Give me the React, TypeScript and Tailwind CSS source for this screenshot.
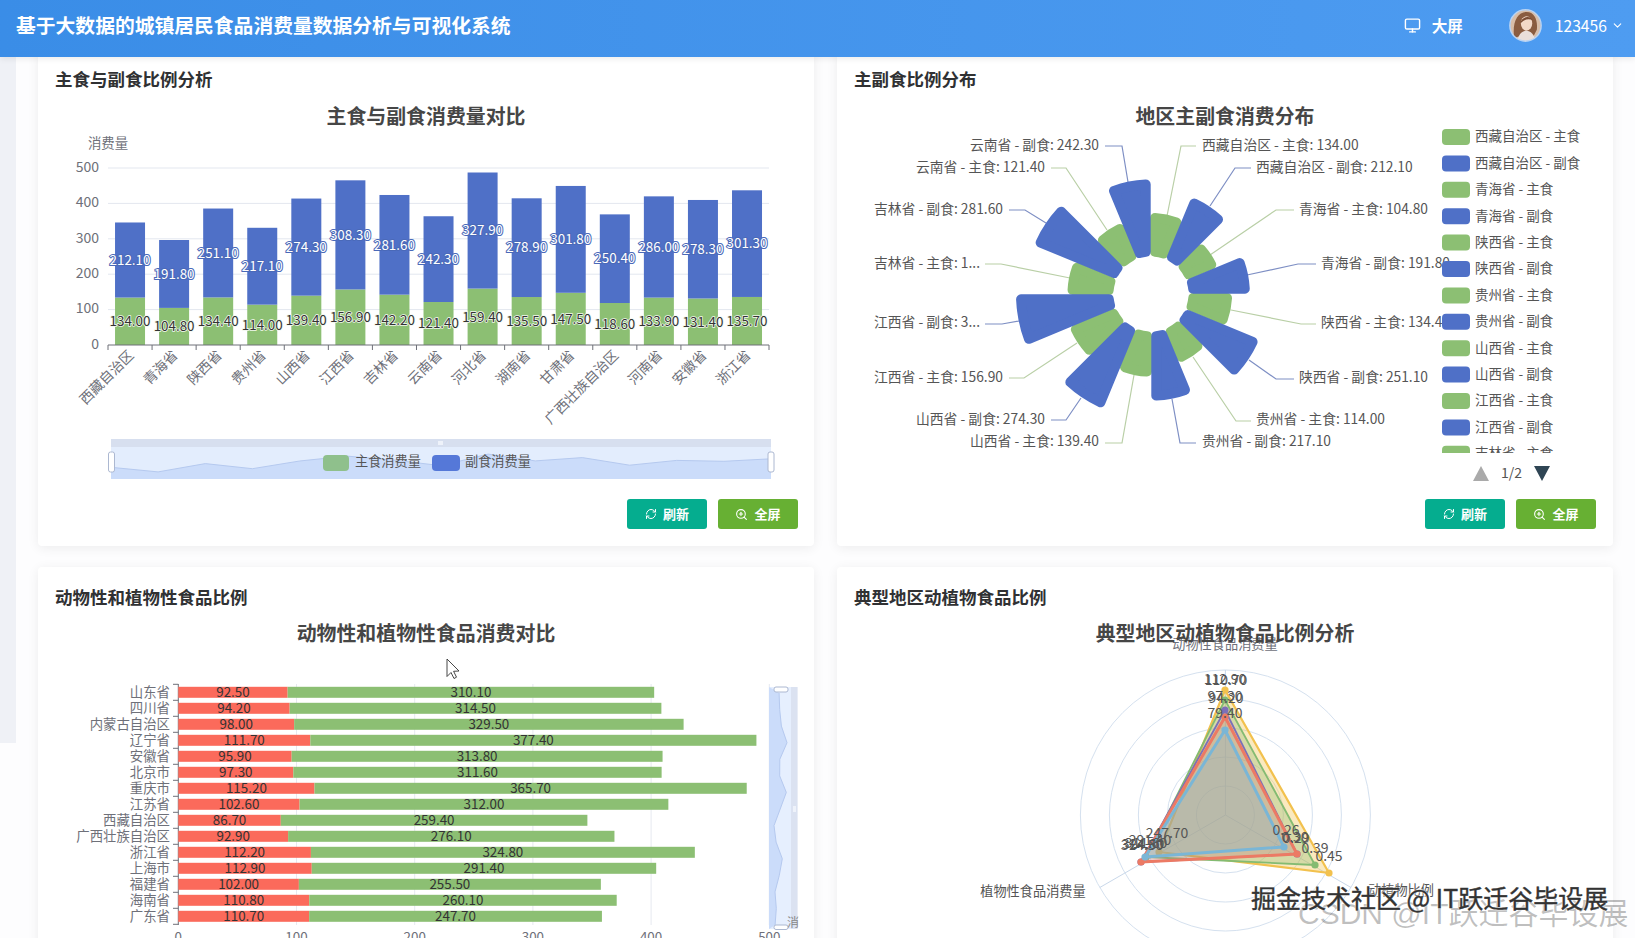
import type { ComponentProps, ReactNode } from 'react'
import { ChevronDown, Monitor, RefreshCw, ZoomIn } from 'lucide-react'

const GREEN = '#8cbf73'
const BLUE = '#4f70c7'
const RED = '#fb6a5b'
const AXIS = '#6e7079'

const stackData = [
  ['西藏自治区', 134, 212.1],
  ['青海省', 104.8, 191.8],
  ['陕西省', 134.4, 251.1],
  ['贵州省', 114, 217.1],
  ['山西省', 139.4, 274.3],
  ['江西省', 156.9, 308.3],
  ['吉林省', 142.2, 281.6],
  ['云南省', 121.4, 242.3],
  ['河北省', 159.4, 327.9],
  ['湖南省', 135.5, 278.9],
  ['甘肃省', 147.5, 301.8],
  ['广西壮族自治区', 118.6, 250.4],
  ['河南省', 133.9, 286],
  ['安徽省', 131.4, 278.3],
  ['浙江省', 135.7, 301.3],
] as const

const barData = [
  ['山东省', 92.5, 310.1],
  ['四川省', 94.2, 314.5],
  ['内蒙古自治区', 98, 329.5],
  ['辽宁省', 111.7, 377.4],
  ['安徽省', 95.9, 313.8],
  ['北京市', 97.3, 311.6],
  ['重庆市', 115.2, 365.7],
  ['江苏省', 102.6, 312],
  ['西藏自治区', 86.7, 259.4],
  ['广西壮族自治区', 92.9, 276.1],
  ['浙江省', 112.2, 324.8],
  ['上海市', 112.9, 291.4],
  ['福建省', 102, 255.5],
  ['海南省', 110.8, 260.1],
  ['广东省', 110.7, 247.7],
] as const

// rose labels: text, anchor x, y, leader line
const roseLabels: [string, number, number, 'start' | 'end', string][] = [
  ['西藏自治区 - 主食: 134.00', 1202, 145, 'start', '1167,216 1181,146 1196,146'],
  ['西藏自治区 - 副食: 212.10', 1256, 167, 'start', '1210,206 1235,168 1251,168'],
  ['青海省 - 主食: 104.80', 1299, 209, 'start', '1210,255 1276,210 1294,210'],
  ['青海省 - 副食: 191.80', 1321, 263, 'start', '1247,275 1298,264 1316,264'],
  ['陕西省 - 主食: 134.40', 1321, 322, 'start', '1231,310 1301,324 1316,324'],
  ['陕西省 - 副食: 251.10', 1299, 377, 'start', '1249,360 1276,379 1294,379'],
  ['贵州省 - 主食: 114.00', 1256, 419, 'start', '1193,357 1236,421 1251,421'],
  ['贵州省 - 副食: 217.10', 1202, 441, 'start', '1172,399 1180,443 1196,443'],
  ['山西省 - 主食: 139.40', 1099, 441, 'end', '1134,375 1122,443 1105,443'],
  ['山西省 - 副食: 274.30', 1045, 419, 'end', '1081,398 1066,420 1051,420'],
  ['江西省 - 主食: 156.90', 1003, 377, 'end', '1077,343 1024,378 1009,378'],
  ['江西省 - 副食: 3...', 980, 322, 'end', '1019,321 1002,324 985,324'],
  ['吉林省 - 主食: 1...', 980, 263, 'end', '1070,278 1001,264 985,264'],
  ['吉林省 - 副食: 281.60', 1003, 209, 'end', '1046,223 1025,210 1009,210'],
  ['云南省 - 主食: 121.40', 1045, 167, 'end', '1107,230 1066,168 1051,168'],
  ['云南省 - 副食: 242.30', 1099, 145, 'end', '1128,182 1122,146 1105,146'],
]

const roseValues = [134, 212.1, 104.8, 191.8, 134.4, 251.1, 114, 217.1, 139.4, 274.3, 156.9, 308.3, 142.2, 281.6, 121.4, 242.3]

const legendNames = ['西藏自治区', '青海省', '陕西省', '贵州省', '山西省', '江西省', '吉林省']

const radarSeries = [
  { color: '#f2c14e', fill: 0.36, width: 2.2, pts: [[1225, 690], [1159, 852], [1329, 873]] },
  { color: '#84bb72', fill: 0.3, width: 1.8, pts: [[1225, 700], [1146, 857], [1315, 865]] },
  { color: '#7d6fb8', fill: 0.14, width: 1.8, pts: [[1225, 710], [1141, 862], [1297, 854]] },
  { color: '#ec7a64', fill: 0.18, width: 3, pts: [[1225, 717], [1141, 862], [1297, 854]] },
  { color: '#7ab6d6', fill: 0.26, width: 3, pts: [[1225, 730], [1145, 857], [1284, 847]] },
]

const radarLabels: [string, number, number][] = [
  ['112.90', 1225, 679], ['110.70', 1226, 680], ['97.30', 1225, 696], ['94.20', 1226, 698], ['79.40', 1225, 713],
  ['247.70', 1167, 833], ['291.40', 1150, 840], ['311.60', 1146, 843], ['314.50', 1142, 845], ['324.80', 1143, 844],
  ['0.26', 1286, 830], ['0.30', 1295, 837], ['0.29', 1296, 838], ['0.39', 1315, 848], ['0.45', 1329, 856],
]

function polar(cx: number, cy: number, r: number, a: number) {
  return `${(cx + r * Math.sin(a)).toFixed(2)} ${(cy - r * Math.cos(a)).toFixed(2)}`
}

function sectorPath(i: number, R: number, g: number) {
  const cx = 1151
  const cy = 294
  const rr = 5
  const ri = 37.5 + rr
  const ro = R - rr
  const step = Math.PI / 8
  const a0 = i * step
  const a1 = a0 + step
  const di = Math.asin(g / ri)
  const dO = Math.asin(g / ro)
  return [
    `M${polar(cx, cy, ri, a0 + di)}`,
    `L${polar(cx, cy, ro, a0 + dO)}`,
    `A${ro} ${ro} 0 0 1 ${polar(cx, cy, ro, a1 - dO)}`,
    `L${polar(cx, cy, ri, a1 - di)}`,
    `A${ri} ${ri} 0 0 0 ${polar(cx, cy, ri, a0 + di)}Z`,
  ].join(' ')
}

// chart text, vertically centred on y
function T(props: ComponentProps<'text'>) {
  return <text dominantBaseline="central" dy={-1.2} {...props} />
}

function Card({ title, x, y, children }: { title: string; x: number; y: number; children: ReactNode }) {
  return (
    <div className="h-[497px] w-[776px] rounded bg-white shadow-[0_2px_12px_rgba(0,0,0,0.07)]">
      <h3 className="px-[17px] pt-[19px] text-[17.5px] leading-[22px] font-bold text-[#303133]">{title}</h3>
      <svg viewBox={`${x} ${y + 46} 776 400`} className="mt-[5px] block h-[400px] w-[776px]">
        {children}
      </svg>
      <div className={`mt-[4px] flex justify-end gap-[11px] ${x > 100 ? 'pr-[17px]' : 'pr-[16px]'}`}>
        <button className="flex h-[30px] w-[80px] items-center justify-center gap-[6px] rounded-[3px] bg-[#05ad8f] text-[13px] font-bold text-white">
          <RefreshCw className="h-[12px] w-[12px]" />
          刷新
        </button>
        <button className="flex h-[30px] w-[80px] items-center justify-center gap-[6px] rounded-[3px] bg-[#67b033] text-[13px] font-bold text-white">
          <ZoomIn className="h-[13px] w-[13px]" />
          全屏
        </button>
      </div>
    </div>
  )
}

function ChartTitle({ x, y, children }: { x: number; y: number; children: string }) {
  return (
    <text x={x} y={y} dy={-1.6} textAnchor="middle" dominantBaseline="central" fontSize="19.9" fontWeight="700" fill="#464646">
      {children}
    </text>
  )
}

function StackChart() {
  const y0 = 345
  const k = 0.354
  const top = 108
  const step = 44.07
  const totals = stackData.map((d) => d[1] + d[2])
  const zoomLine = totals.map((t, i) => `${(111 + (i * 660) / 14).toFixed(1)},${(472 - ((t - 296) / 192) * 18).toFixed(1)}`)
  return (
    <>
      <ChartTitle x={426} y={117}>主食与副食消费量对比</ChartTitle>
      <T x={108} y={143} textAnchor="middle" fontSize="13.4" fill={AXIS}>消费量</T>
      {[0, 100, 200, 300, 400, 500].map((v) => (
        <g key={v}>
          {v > 0 && <line x1={top} x2={769} y1={y0 - v * k} y2={y0 - v * k} stroke="#e3e7ef" />}
          <T x={99} y={y0 - v * k - 1} textAnchor="end" fontSize="14" fill={AXIS}>{v}</T>
        </g>
      ))}
      {stackData.map(([name, a, b], i) => {
        const c = top + step * (i + 0.5)
        return (
          <g key={name}>
            <rect x={c - 15} y={y0 - a * k} width={30} height={a * k} fill={GREEN} />
            <rect x={c - 15} y={y0 - (a + b) * k} width={30} height={b * k} fill={BLUE} />
          </g>
        )
      })}
      <line x1={top} x2={769} y1={y0} y2={y0} stroke={AXIS} />
      {stackData.map(([name, a, b], i) => {
        const c = top + step * (i + 0.5)
        return (
          <g key={name} fontSize="13.4">
            <line x1={top + step * i} x2={top + step * i} y1={y0} y2={y0 + 5} stroke={AXIS} />
            <T x={c} y={y0 - (a * k) / 2} textAnchor="middle" fill="#333" stroke="#f3f8ef" strokeWidth="1.5" paintOrder="stroke">
              {a.toFixed(2)}
            </T>
            <T x={c} y={y0 - (a + b / 2) * k} textAnchor="middle" fill="#fff" stroke="#4a69b8" strokeWidth="2" paintOrder="stroke">
              {b.toFixed(2)}
            </T>
            <text transform={`translate(${c - 4.5} 347) rotate(-45)`} textAnchor="end" dominantBaseline="hanging" fontSize="13.9" fill={AXIS}>
              {name}
            </text>
          </g>
        )
      })}
      <line x1={769} x2={769} y1={y0} y2={y0 + 5} stroke={AXIS} />
      {/* slider */}
      <rect x={111} y={439} width={660} height={8} fill="#d7dfef" />
      <rect x={438} y={441} width={5} height={4} fill="#eef2fa" />
      <rect x={111} y={447} width={660} height={32} fill="#e3edfd" />
      <path d={`M${zoomLine.join(' L')} L771,479 L111,479Z`} fill="#cbdcfa" />
      <polyline points={zoomLine.join(' ')} fill="none" stroke="#b5c9ef" />
      <rect x={108.5} y={452} width={6} height={20} rx={2} fill="#fff" stroke="#acb8d1" />
      <rect x={768} y={452} width={6} height={20} rx={2} fill="#fff" stroke="#acb8d1" />
      <rect x={323} y={455} width={26} height={16} rx={4} fill="#8fc08c" />
      <T x={355} y={462} fontSize="13.2" fill="#555">主食消费量</T>
      <rect x={432} y={455} width={28} height={16} rx={4} fill="#5578d8" />
      <T x={465} y={462} fontSize="13.2" fill="#555">副食消费量</T>
    </>
  )
}

function RoseChart() {
  const items = legendNames.flatMap((n) => [`${n} - 主食`, `${n} - 副食`]).slice(0, 13)
  const sectors = roseValues.map((v, i) => ({ v, i }))
  return (
    <>
      <ChartTitle x={1225} y={117}>地区主副食消费分布</ChartTitle>
      {roseLabels.map(([label, x, y, anchor, line], i) => (
        <g key={label}>
          <polyline points={line} fill="none" stroke={i % 2 === 0 ? '#b9cfa6' : '#7e8fc4'} strokeWidth="1.2" />
          <T x={x} y={y} textAnchor={anchor} fontSize="13.8" fill="#555">{label}</T>
        </g>
      ))}
      {/* greens first so the blue sectors lie over their edges */}
      {sectors.filter((s) => s.i % 2 === 0).map(({ v, i }) => (
        <path key={i} d={sectorPath(i, 81 + (v - 134) * 0.31, 4)} fill={GREEN} stroke={GREEN} strokeWidth="10" strokeLinejoin="round" />
      ))}
      {sectors.filter((s) => s.i % 2 === 1).map(({ v, i }) => (
        <path key={i} d={sectorPath(i, 81 + (v - 134) * 0.31, 5.3)} fill={BLUE} stroke={BLUE} strokeWidth="10" strokeLinejoin="round" />
      ))}
      <clipPath id="legend-clip">
        <rect x={1436} y={125} width={170} height={328} />
      </clipPath>
      <g clipPath="url(#legend-clip)">
        {items.map((t, i) => (
          <g key={t}>
            <rect x={1442} y={129 + i * 26.4} width={28} height={16} rx={4} fill={i % 2 === 0 ? GREEN : BLUE} />
            <T x={1475} y={136.5 + i * 26.4} fontSize="13.5" fill="#555">{t}</T>
          </g>
        ))}
      </g>
      <path d="M1481 466 L1489 481 L1473 481Z" fill="#aaa" />
      <T x={1501} y={473} fontSize="14" fill="#555">1/2</T>
      <path d="M1534 466 L1550 466 L1542 481Z" fill="#2f4554" />
    </>
  )
}

function BarChart() {
  const x0 = 178.3
  const k = 1.182
  const wave = barData.map((d, i) => {
    const t = d[1] + d[2]
    return `${(774 + (t - 346) * 0.0909).toFixed(1)},${(693 + (i * 232) / 14).toFixed(1)}`
  })
  return (
    <>
      <ChartTitle x={426} y={634}>动物性和植物性食品消费对比</ChartTitle>
      {[100, 200, 300, 400, 500].map((v) => (
        <line key={v} x1={x0 + v * k} x2={x0 + v * k} y1={684} y2={925} stroke="#e6e9f0" />
      ))}
      <line x1={x0} x2={x0} y1={684} y2={925} stroke={AXIS} />
      {barData.map(([name, a, b], i) => {
        const cy = 692.3 + i * 16
        return (
          <g key={name} fontSize="13.4">
            <line x1={173} x2={x0} y1={684.3 + i * 16} y2={684.3 + i * 16} stroke={AXIS} />
            <T x={170} y={cy} textAnchor="end" fill={AXIS}>{name}</T>
            <rect x={x0} y={cy - 5.5} width={a * k} height={11} fill={RED} />
            <rect x={x0 + a * k} y={cy - 5.5} width={b * k} height={11} fill={GREEN} />
            <T x={x0 + (a * k) / 2} y={cy} textAnchor="middle" fill="#333">{a.toFixed(2)}</T>
            <T x={x0 + (a + b / 2) * k} y={cy} textAnchor="middle" fill="#333">{b.toFixed(2)}</T>
          </g>
        )
      })}
      <line x1={173} x2={x0} y1={924.3} y2={924.3} stroke={AXIS} />
      {[0, 100, 200, 300, 400, 500].map((v) => (
        <T key={v} x={x0 + v * k} y={937.5} textAnchor="middle" fontSize="13.4" fill={AXIS}>{v}</T>
      ))}
      {/* vertical slider */}
      <rect x={769} y={687} width={22} height={242} fill="#e6effe" />
      <rect x={791} y={687} width={6.6} height={242} fill="#dbe2f1" />
      <rect x={793} y={806} width={3} height={6} fill="#eef2fa" />
      <path d={`M769,687 L${wave.join(' L')} L769,929Z`} fill="#cbdcfa" />
      <polyline points={wave.join(' ')} fill="none" stroke="#b5c9ef" />
      <rect x={774} y={687} width={14} height={5} rx={2} fill="#fff" stroke="#acb8d1" />
      <rect x={774} y={925} width={14} height={4.5} rx={2} fill="#fff" stroke="#acb8d1" />
      <T x={787} y={923} fontSize="12" fill="#888">消</T>
      <path d="M447 659 L447 676.5 L451 672.5 L454 678.5 L456.5 677.2 L453.6 671.3 L459 671Z" fill="#fff" stroke="#333" strokeWidth="0.9" />
    </>
  )
}

function RadarChart() {
  const cx = 1225.4
  const cy = 815
  return (
    <>
      {[29, 58, 87, 116, 145].map((r) => (
        <circle key={r} cx={cx} cy={cy} r={r} fill="none" stroke="#d5e1ef" />
      ))}
      <line x1={cx} y1={cy} x2={cx} y2={cy - 145} stroke="#c9d8ea" />
      <line x1={cx} y1={cy} x2={cx - 125.6} y2={cy + 72.5} stroke="#c9d8ea" />
      <line x1={cx} y1={cy} x2={cx + 125.6} y2={cy + 72.5} stroke="#c9d8ea" />
      {radarSeries.map((s) => (
        <g key={s.color}>
          <polygon points={s.pts.map((p) => p.join(',')).join(' ')} fill={s.color} fillOpacity={s.fill} stroke={s.color} strokeWidth={s.width} strokeLinejoin="round" />
          {s.pts.map((p) => (
            <circle key={p.join()} cx={p[0]} cy={p[1]} r={3.6} fill={s.color} />
          ))}
        </g>
      ))}
      {radarLabels.map(([t, x, y]) => (
        <T key={t} x={x} y={y} textAnchor="middle" fontSize="14" fill="#555">{t}</T>
      ))}
      <T x={1225} y={645} textAnchor="middle" fontSize="13.2" fill={AXIS}>动物性食品消费量</T>
      <T x={1033} y={892} textAnchor="middle" fontSize="13.2" fill="#555">植物性食品消费量</T>
      <T x={1401} y={891} textAnchor="middle" fontSize="13.2" fill="#555">动植物比例</T>
      <ChartTitle x={1225} y={634}>典型地区动植物食品比例分析</ChartTitle>
    </>
  )
}

function Avatar() {
  return (
    <svg viewBox="0 0 32 32" className="h-[33px] w-[33px] shrink-0">
      <clipPath id="avatar-clip">
        <circle cx="16" cy="16" r="15" />
      </clipPath>
      <g clipPath="url(#avatar-clip)">
        <rect width="32" height="32" fill="#d8bda8" />
        <path d="M5 28 C3 13 8 3 17 3 C25 3 28 11 27 20 L24 26 L12 26Z" fill="#8a5c40" />
        <ellipse cx="17" cy="14" rx="5.5" ry="7" fill="#f3d9c8" />
        <path d="M11 14 C12 7 21 6 23 11 C19 9 15 10 11 14Z" fill="#7a4d35" />
        <path d="M8 32 C9 24 13 21 17 21 C21 21 25 25 26 32Z" fill="#eadfda" />
      </g>
      <circle cx="16" cy="16" r="15.2" fill="none" stroke="#b9d3f3" strokeWidth="1.4" />
    </svg>
  )
}

export default function App() {
  return (
    <div className="relative flex h-screen flex-col overflow-hidden bg-[#fdfdfe] font-['Noto_Sans_CJK_SC','Liberation_Sans',sans-serif]">
      <header className="relative z-10 flex h-[57px] shrink-0 items-center justify-between bg-gradient-to-r from-[#3a8de7] to-[#4e9cf1] pr-[11px] pl-[16px] text-white shadow-[0_2px_6px_rgba(0,0,0,0.08)]">
        <h1 className="-mt-[7px] text-[19.8px] font-bold">基于大数据的城镇居民食品消费量数据分析与可视化系统</h1>
        <div className="-mt-[6px] flex items-center">
          <Monitor className="h-[17px] w-[17px]" />
          <span className="ml-[11px] text-[15.5px] font-bold">大屏</span>
          <span className="ml-[46px]"><Avatar /></span>
          <span className="ml-[13px] text-[15.7px]">123456</span>
          <ChevronDown className="ml-[4px] h-[13px] w-[13px]" />
        </div>
      </header>
      <div className="flex min-h-0 flex-1">
        <div className="h-[686px] w-[16px] shrink-0 bg-[#eff1f6]" />
        <main className="-mt-[8px] grid grid-cols-[776px_776px] content-start gap-x-[23px] gap-y-[21px] pl-[22px]">
          <Card title="主食与副食比例分析" x={38} y={49}><StackChart /></Card>
          <Card title="主副食比例分布" x={837} y={49}><RoseChart /></Card>
          <Card title="动物性和植物性食品比例" x={38} y={567}><BarChart /></Card>
          <Card title="典型地区动植物食品比例" x={837} y={567}><RadarChart /></Card>
        </main>
      </div>
      {/* watermarks from the screen recording */}
      <div className="absolute top-[896px] left-[1298px] z-20 font-['Liberation_Sans','Noto_Sans_CJK_SC',sans-serif] text-[30px] leading-[36px] whitespace-nowrap text-black/25">
        CSDN @IT跃迁谷毕设展
      </div>
      <div className="absolute top-[881px] left-[1251px] z-20 text-[25px] leading-[32px] whitespace-nowrap text-[#333] [-webkit-text-stroke:0.4px_#333] [text-shadow:0_0_2px_#fff,0_0_2px_#fff]">
        掘金技术社区 @ IT跃迁谷毕设展
      </div>
    </div>
  )
}
